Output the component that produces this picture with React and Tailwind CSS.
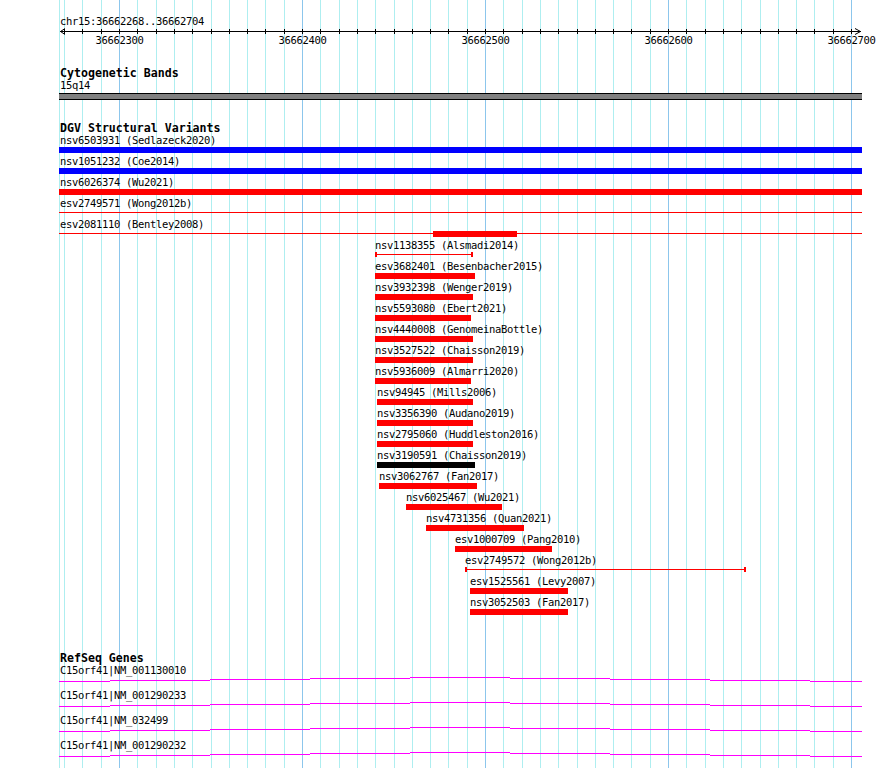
import React from 'react'

// Track canvas: x = 59 .. 862 (803px); 10bp grid every ~18.3px, 36662300 at x=119
const LEFT = 59
const WIDTH = 803

const gridLines = [{ x: 59, major: false }]
for (let k = -3; k <= 40; k++) {
  gridLines.push({ x: Math.round(119 + k * 18.3), major: k % 10 === 0 })
}

const tickLabels = [
  { x: 119, text: '36662300' },
  { x: 302, text: '36662400' },
  { x: 485, text: '36662500' },
  { x: 668, text: '36662600' },
  { x: 851, text: '36662700' },
]

const barColor = {
  red: 'bg-[#ff0000]',
  blue: 'bg-[#0000ff]',
  black: 'bg-black',
}

// DGV rows, 21px each: label line + 6px glyph
const dgvRows = [
  { label: 'nsv6503931 (Sedlazeck2020)', lx: 60, feats: [{ x: 59, w: 803, kind: 'bar', color: 'blue' }] },
  { label: 'nsv1051232 (Coe2014)', lx: 60, feats: [{ x: 59, w: 803, kind: 'bar', color: 'blue' }] },
  { label: 'nsv6026374 (Wu2021)', lx: 60, feats: [{ x: 59, w: 803, kind: 'bar', color: 'red' }] },
  { label: 'esv2749571 (Wong2012b)', lx: 60, feats: [{ x: 59, w: 803, kind: 'line', color: 'red' }] },
  {
    label: 'esv2081110 (Bentley2008)',
    lx: 60,
    feats: [
      { x: 59, w: 803, kind: 'line', color: 'red' },
      { x: 433, w: 84, kind: 'bar', color: 'red' },
    ],
  },
  { label: 'nsv1138355 (Alsmadi2014)', lx: 375, feats: [{ x: 375, w: 98, kind: 'capped', color: 'red' }] },
  { label: 'esv3682401 (Besenbacher2015)', lx: 375, feats: [{ x: 375, w: 100, kind: 'bar', color: 'red' }] },
  { label: 'nsv3932398 (Wenger2019)', lx: 375, feats: [{ x: 375, w: 98, kind: 'bar', color: 'red' }] },
  { label: 'nsv5593080 (Ebert2021)', lx: 375, feats: [{ x: 375, w: 96, kind: 'bar', color: 'red' }] },
  { label: 'nsv4440008 (GenomeinaBottle)', lx: 375, feats: [{ x: 375, w: 98, kind: 'bar', color: 'red' }] },
  { label: 'nsv3527522 (Chaisson2019)', lx: 375, feats: [{ x: 375, w: 98, kind: 'bar', color: 'red' }] },
  { label: 'nsv5936009 (Almarri2020)', lx: 375, feats: [{ x: 375, w: 96, kind: 'bar', color: 'red' }] },
  { label: 'nsv94945 (Mills2006)', lx: 377, feats: [{ x: 377, w: 96, kind: 'bar', color: 'red' }] },
  { label: 'nsv3356390 (Audano2019)', lx: 377, feats: [{ x: 377, w: 96, kind: 'bar', color: 'red' }] },
  { label: 'nsv2795060 (Huddleston2016)', lx: 377, feats: [{ x: 377, w: 96, kind: 'bar', color: 'red' }] },
  { label: 'nsv3190591 (Chaisson2019)', lx: 377, feats: [{ x: 377, w: 98, kind: 'bar', color: 'black' }] },
  { label: 'nsv3062767 (Fan2017)', lx: 379, feats: [{ x: 379, w: 98, kind: 'bar', color: 'red' }] },
  { label: 'nsv6025467 (Wu2021)', lx: 406, feats: [{ x: 406, w: 96, kind: 'bar', color: 'red' }] },
  { label: 'nsv4731356 (Quan2021)', lx: 426, feats: [{ x: 426, w: 98, kind: 'bar', color: 'red' }] },
  { label: 'esv1000709 (Pang2010)', lx: 455, feats: [{ x: 455, w: 97, kind: 'bar', color: 'red' }] },
  { label: 'esv2749572 (Wong2012b)', lx: 465, feats: [{ x: 465, w: 281, kind: 'capped', color: 'red' }] },
  { label: 'esv1525561 (Levy2007)', lx: 470, feats: [{ x: 470, w: 98, kind: 'bar', color: 'red' }] },
  { label: 'nsv3052503 (Fan2017)', lx: 470, feats: [{ x: 470, w: 98, kind: 'bar', color: 'red' }] },
]

const genes = ['C15orf41|NM_001130010', 'C15orf41|NM_001290233', 'C15orf41|NM_032499', 'C15orf41|NM_001290232']

// shallow "hat" intron line, rises 1px every 100px toward the middle
const intronPath =
  'M0 5.5H51M51 4.5H151M151 3.5H251M251 2.5H351M351 1.5H451M451 2.5H551M551 3.5H651M651 4.5H751M751 5.5H803'

function Feature({ f }) {
  const left = f.x - LEFT
  const color = barColor[f.color]
  if (f.kind === 'bar') {
    return <div className={`absolute top-[15px] h-[6px] ${color}`} style={{ left, width: f.w }} />
  }
  if (f.kind === 'line') {
    return <div className={`absolute top-[17px] h-px ${color}`} style={{ left, width: f.w }} />
  }
  return (
    <>
      <div className={`absolute top-[17px] h-px ${color}`} style={{ left, width: f.w }} />
      <div className={`absolute top-[15px] h-[5px] w-[2px] ${color}`} style={{ left }} />
      <div className={`absolute top-[15px] h-[5px] w-[2px] ${color}`} style={{ left: left + f.w - 2 }} />
    </>
  )
}

function Heading({ children, className = '' }) {
  return (
    <div className={`ml-px text-[11.6px] font-bold tracking-normal whitespace-nowrap ${className}`}>{children}</div>
  )
}

export default function App() {
  return (
    <div className="relative h-[768px] w-[890px] overflow-hidden bg-white font-['DejaVu_Sans_Mono','Liberation_Mono',monospace] text-[10.5px] tracking-[-0.32px] text-black">
      {/* background grid */}
      <svg className="absolute inset-0" width="890" height="768" shapeRendering="crispEdges">
        {gridLines.map((g, i) => (
          <line
            key={i}
            x1={g.x + 0.5}
            x2={g.x + 0.5}
            y1="0"
            y2="768"
            stroke={g.major ? '#8cc6ec' : '#aeeef0'}
            strokeWidth="1"
          />
        ))}
      </svg>

      <div className="relative ml-[59px] w-[803px]">
        {/* ruler */}
        <div className="ml-px h-[28px] pt-[15px] leading-[12px]">chr15:36662268..36662704</div>
        <svg className="block" width={WIDTH + 10} height="7">
          <line x1="1" x2="802" y1="3.5" y2="3.5" stroke="black" shapeRendering="crispEdges" />
          {gridLines.slice(1).map((g, i) => (
            <line
              key={i}
              x1={g.x - LEFT + 0.5}
              x2={g.x - LEFT + 0.5}
              y1="1"
              y2="6"
              stroke="black"
              shapeRendering="crispEdges"
            />
          ))}
          <polyline points="6,0.5 1.5,3.5 6,6.5" fill="none" stroke="black" />
          <polyline points="796,0.5 801.5,3.5 796,6.5" fill="none" stroke="black" />
        </svg>
        <div className="relative h-[13px] leading-[11px]">
          {tickLabels.map((t) => (
            <span
              key={t.text}
              className="absolute top-0 -translate-x-1/2 whitespace-nowrap"
              style={{ left: t.x - LEFT + 0.5 }}
            >
              {t.text}
            </span>
          ))}
        </div>

        {/* Cytogenetic Bands */}
        <Heading className="mt-[19px] leading-[13px]">Cytogenetic Bands</Heading>
        <div className="ml-px h-[13px] leading-[11px]">15q14</div>
        <div className="h-[7px] border-y border-black bg-[#808080]" />

        {/* DGV Structural Variants */}
        <Heading className="mt-[24px] leading-[8px]">DGV Structural Variants</Heading>
        {dgvRows.map((r) => (
          <div key={r.label} className="relative h-[21px]">
            <div
              className="absolute top-0 h-[15px] whitespace-nowrap pt-[2px] leading-[13px]"
              style={{ left: r.lx - LEFT }}
            >
              {r.label}
            </div>
            {r.feats.map((f, i) => (
              <Feature key={i} f={f} />
            ))}
          </div>
        ))}

        {/* RefSeq Genes */}
        <Heading className="mt-[37px] leading-[12px]">RefSeq Genes</Heading>
        {genes.map((g) => (
          <div key={g} className="h-[25px]">
            <div className="ml-px h-[12px] leading-[12px] whitespace-nowrap">{g}</div>
            <svg className="block" width={WIDTH} height="13" shapeRendering="crispEdges">
              <path d={intronPath} stroke="#ff00ff" strokeWidth="1" fill="none" />
            </svg>
          </div>
        ))}
      </div>
    </div>
  )
}
